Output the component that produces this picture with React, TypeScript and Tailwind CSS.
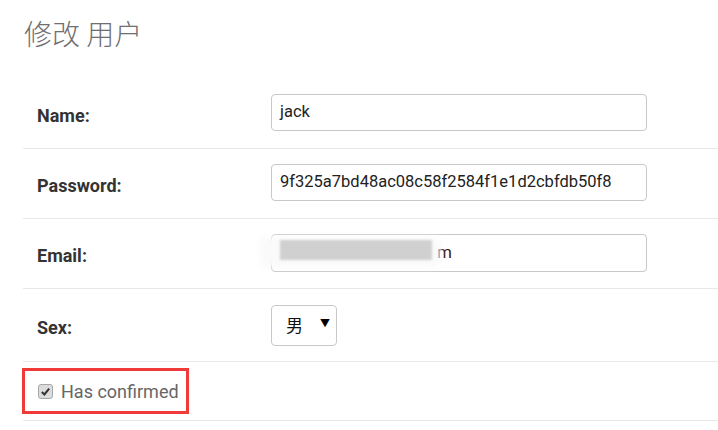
const rows = [
  { label: "Name:", value: "jack" },
  { label: "Password:", value: "9f325a7bd48ac08c58f2584f1e1d2cbfdb50f8" },
];

const Label = ({ children }: { children: string }) => (
  <div className="mt-[5px] w-[248px] pl-[14px] text-[18px] font-bold text-[#333]">{children}</div>
);

const App = () => {
  return (
    <div className="h-[430px] w-[718px] overflow-hidden bg-white pl-[23px] font-['Roboto','Noto_Sans_CJK_SC',sans-serif]">
      <h1 className="h-[79px] pt-[12px] pl-px font-['Noto_Sans_CJK_SC',sans-serif] text-[28px] font-light text-[#6f6f6f]">
        修改 用户
      </h1>
      <div className="w-[720px]">
        {rows.map((r) => (
          <div key={r.label} className="flex h-[70px] items-center border-b border-[#e8e8e8] pb-[2px]">
            <Label>{r.label}</Label>
            <div className="flex h-[37px] w-[376px] items-center rounded-[4px] border border-[#c8c8c8] px-[8px] text-[16.5px] text-[#222]">
              {r.value}
            </div>
          </div>
        ))}
        <div className="flex h-[70px] items-center border-b border-[#e8e8e8] pb-[2px]">
          <Label>Email:</Label>
          <div className="relative flex h-[38px] w-[376px] items-center rounded-[4px] border border-[#c8c8c8] px-[8px] text-[17px] text-[#3a1010]">
            <span className="pl-[157px]">m</span>
            <div className="absolute left-[-12px] top-[2px] h-[30px] w-[180px] rounded-[6px] bg-[#fafafa] blur-[3px]" />
            <div className="absolute left-[8px] top-[5px] h-[20px] w-[152px] bg-[#d0d0d0] blur-[1px]" />
          </div>
        </div>
        <div className="flex h-[73px] items-center border-b border-[#e8e8e8]">
          <Label>Sex:</Label>
          <div className="flex h-[41px] w-[66px] items-center rounded-[4px] border border-[#c8c8c8] pl-[14px] text-[17px] text-[#111]">
            <span className="font-['Noto_Sans_CJK_SC',sans-serif]">男</span>
            <span className="ml-[17px] mb-[4px] text-[10px] text-black">▼</span>
          </div>
        </div>
        <div className="flex h-[59px] items-center border-b border-[#e8e8e8]">
          <div className="ml-[-1px] flex h-[46px] w-[167px] items-center border-[3px] border-[#f03a3a] pl-[13px]">
            <span className="flex h-[15px] w-[15px] items-center justify-center rounded-[3px] border border-[#a8a8a8] bg-[#dcdcdc]">
              <svg viewBox="0 0 12 12" className="h-[11px] w-[11px]">
                <path d="M2 6.5 L4.8 9.2 L10 2.8" fill="none" stroke="#333" strokeWidth="2.2" />
              </svg>
            </span>
            <span className="ml-[8px] text-[18px] text-[#666]">Has confirmed</span>
          </div>
        </div>
      </div>
    </div>
  );
};

export default App;
